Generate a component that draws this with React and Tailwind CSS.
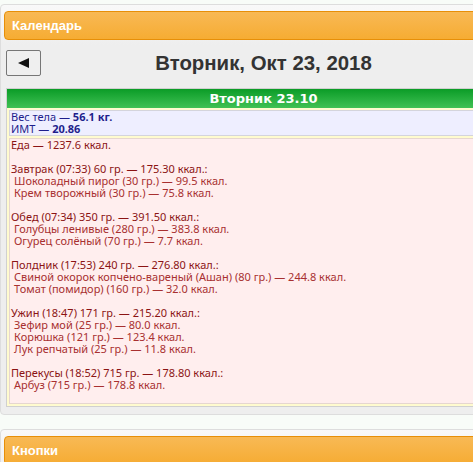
import React from "react";

function Panel({ title, children }) {
  return (
    <div className="rounded-[4px] border border-[#dddddd] bg-[linear-gradient(#f9f9f9,#eeeeee_40px)] p-[3px] pt-[6px]">
      <div className="flex h-[29px] items-center rounded-[4px] border border-[#e78f08] bg-[linear-gradient(#f8b955,#f6ac33)] pl-[7px] font-['Liberation_Sans',Arial,sans-serif] text-[13px] font-bold text-white">
        {title}
      </div>
      {children}
    </div>
  );
}

const meals = [
  {
    head: "Завтрак (07:33) 60 гр. — 175.30 ккал.:",
    items: ["Шоколадный пирог (30 гр.) — 99.5 ккал.", "Крем творожный (30 гр.) — 75.8 ккал."],
  },
  {
    head: "Обед (07:34) 350 гр. — 391.50 ккал.:",
    items: ["Голубцы ленивые (280 гр.) — 383.8 ккал.", "Огурец солёный (70 гр.) — 7.7 ккал."],
  },
  {
    head: "Полдник (17:53) 240 гр. — 276.80 ккал.:",
    items: [
      "Свиной окорок копчено-вареный (Ашан) (80 гр.) — 244.8 ккал.",
      "Томат (помидор) (160 гр.) — 32.0 ккал.",
    ],
  },
  {
    head: "Ужин (18:47) 171 гр. — 215.20 ккал.:",
    items: [
      "Зефир мой (25 гр.) — 80.0 ккал.",
      "Корюшка (121 гр.) — 123.4 ккал.",
      "Лук репчатый (25 гр.) — 11.8 ккал.",
    ],
  },
  {
    head: "Перекусы (18:52) 715 гр. — 178.80 ккал.:",
    items: ["Арбуз (715 гр.) — 178.8 ккал."],
  },
];

export default function App() {
  return (
    <div className="h-[462px] w-[473px] overflow-hidden bg-[#f8fcf8]">
      <div className="w-[527px] pt-[4px]">
        <Panel title="Календарь">
          <div className="px-[2px] pb-[4px]">
            <div className="mt-[10px] flex h-[26px] items-center">
              <button className="flex h-[26px] w-[35px] items-center justify-center rounded-[2px] border border-[#767676] bg-[#efefef]">
                <svg width="11" height="10" viewBox="0 0 11 10">
                  <polygon points="0,5 11,0 11,10" fill="#111" />
                </svg>
              </button>
              <div className="flex-1 text-center font-['Liberation_Sans',Arial,sans-serif] text-[20.4px] font-bold leading-[24px] text-[#333333]">
                Вторник, Окт 23, 2018
              </div>
              <button className="flex h-[26px] w-[35px] items-center justify-center rounded-[2px] border border-[#767676] bg-[#efefef]">
                <svg width="11" height="10" viewBox="0 0 11 10">
                  <polygon points="11,5 0,0 0,10" fill="#111" />
                </svg>
              </button>
            </div>
            <div className="mt-[12px] border border-[#d0d0d0] bg-[#fffbcf]">
              <div className="flex h-[19px] items-center justify-center bg-[linear-gradient(#0b9c27,#40c154)] font-['DejaVu_Sans',sans-serif] text-[13px] font-bold text-white">
                Вторник 23.10
              </div>
              <div className="flex flex-col gap-[2px] p-[2px] font-['Noto_Sans',sans-serif] text-[11px] leading-[12px]">
                <div className="border border-[#d4d4dc] bg-[#eeeeff] pl-px text-[#1e1e8c]">
                  <div>
                    Вес тела — <span className="font-bold">56.1 кг.</span>
                  </div>
                  <div>
                    ИМТ — <span className="font-bold">20.86</span>
                  </div>
                </div>
                <div className="border border-[#e6d6d0] bg-[#ffeeee] pb-[12px] pl-px text-[#8b1414]">
                  <div>Еда — 1237.6 ккал.</div>
                  {meals.map((m) => (
                    <div key={m.head}>
                      <div className="h-[12px]" />
                      <div>{m.head}</div>
                      {m.items.map((it) => (
                        <div key={it} className="pl-[3px] text-[#a83030]">
                          {it}
                        </div>
                      ))}
                    </div>
                  ))}
                </div>
              </div>
            </div>
          </div>
        </Panel>
        <div className="mt-[14px]">
          <Panel title="Кнопки">
            <div className="h-[40px]" />
          </Panel>
        </div>
      </div>
    </div>
  );
}
